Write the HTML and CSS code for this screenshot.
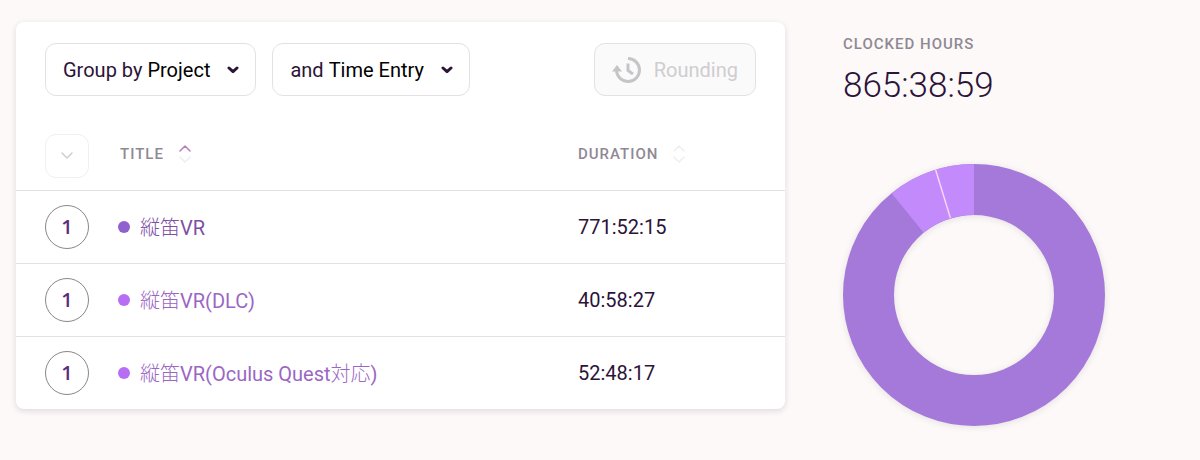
FILE: index.html
```html
<!DOCTYPE html>
<html lang="en">
<head>
    <meta charset="UTF-8">
    <meta name="viewport" content="width=device-width, initial-scale=1.0">
    <title>Summary Report</title>
    <link rel="stylesheet" href="styles.css">
</head>
<body>
    <main class="report">
        <section class="card">
            <div class="toolbar">
                <div class="dropdown">
                    <label for="group">Group by</label>
                    <select id="group">
                        <option>Project</option>
                        <option>Client</option>
                        <option>User</option>
                    </select>
                    <svg class="caret" viewBox="0 0 12 8" width="12" height="8"><path d="M2 2l4 3.600 4-3.600"/></svg>
                </div>
                <div class="dropdown">
                    <label for="subgroup">and</label>
                    <select id="subgroup">
                        <option>Time Entry</option>
                        <option>User</option>
                    </select>
                    <svg class="caret" viewBox="0 0 12 8" width="12" height="8"><path d="M2 2l4 3.600 4-3.600"/></svg>
                </div>
                <button class="rounding" disabled>
                    <svg viewBox="0 0 30 28" width="30" height="28">
                        <path class="arc" d="M16 2.500a11.500 11.500 0 1 1-11.500 12"/>
                        <path class="head" d="M0 15.500L5 9l5 6.500z"/>
                        <path class="hands" d="M16 7.500v7l5 3.500"/>
                    </svg>
                    Rounding
                </button>
            </div>

            <table>
                <thead>
                    <tr>
                        <th class="toggle">
                            <button class="expand" aria-label="Expand all">
                                <svg viewBox="0 0 12 8" width="12" height="8"><path d="M1 1l5 5 5-5"/></svg>
                            </button>
                        </th>
                        <th class="title">
                            <button class="sort">TITLE
                                <svg viewBox="0 0 12 18" width="12" height="18"><path class="active" d="M1 6l5-5 5 5"/><path d="M1 12l5 5 5-5"/></svg>
                            </button>
                        </th>
                        <th class="duration">
                            <button class="sort">DURATION
                                <svg viewBox="0 0 12 18" width="12" height="18"><path d="M1 6l5-5 5 5"/><path d="M1 12l5 5 5-5"/></svg>
                            </button>
                        </th>
                    </tr>
                </thead>
                <tbody>
                    <tr>
                        <td class="toggle"><button class="count">1</button></td>
                        <td><a class="project dark" href="#"><span><span class="ja" lang="ja">縦笛</span>VR</span></a></td>
                        <td>771:52:15</td>
                    </tr>
                    <tr>
                        <td class="toggle"><button class="count">1</button></td>
                        <td><a class="project" href="#"><span><span class="ja" lang="ja">縦笛</span>VR(DLC)</span></a></td>
                        <td>40:58:27</td>
                    </tr>
                    <tr>
                        <td class="toggle"><button class="count">1</button></td>
                        <td><a class="project" href="#"><span><span class="ja" lang="ja">縦笛</span>VR(Oculus Quest<span class="ja" lang="ja">対応</span>)</span></a></td>
                        <td>52:48:17</td>
                    </tr>
                </tbody>
            </table>
        </section>

        <aside class="summary">
            <h2>CLOCKED HOURS</h2>
            <p class="total">865:38:59</p>
            <!-- one degree of the ring per unit of path length -->
            <svg class="donut" viewBox="0 0 262 262" role="img" aria-label="Hours by project">
                <g transform="rotate(-90 131 131)">
                    <circle class="main" cx="131" cy="131" r="105.500" pathLength="360"/>
                    <circle class="light" cx="131" cy="131" r="105.500" pathLength="360" stroke-dasharray="39 321" stroke-dashoffset="-321"/>
                </g>
                <path class="split" d="M92.600 5.800L107.400 54"/>
            </svg>
        </aside>
    </main>
</body>
</html>
```
FILE: styles.css
```css
* {
    box-sizing: border-box;
}

body {
    margin: 0;
    background-color: #fdf9f8;
    color: #2c1338;
    font-family: Roboto, "Noto Sans CJK JP", sans-serif;
    font-size: 20px;
}

button, select {
    font: inherit;
    cursor: pointer;
}

svg {
    fill: none;
    stroke-linecap: round;
    stroke-linejoin: round;
}

.report {
    display: grid;
    grid-template-columns: minmax(0, 1fr) 341px;
    gap: 58px;
    align-items: start;
    padding: 22px 16px;
}

.card {
    background-color: #fff;
    border-radius: 8px;
    box-shadow: 0 2px 6px rgba(44, 19, 56, 0.14);
}

.toolbar {
    display: flex;
    gap: 16px;
    padding: 21px 29px 27px;
}

.dropdown {
    position: relative;
    display: flex;
    align-items: center;
    height: 53px;
    padding-left: 17px;
    border: 1px solid #e3e1e4;
    border-radius: 11px;
}

.dropdown select {
    height: 100%;
    padding: 0 44px 0 5px;
    border: none;
    background: none;
    color: #000;
    appearance: none;
}

.caret {
    position: absolute;
    right: 16px;
    stroke: #2c1338;
    stroke-width: 3;
    pointer-events: none;
}

.rounding {
    display: flex;
    align-items: center;
    gap: 12px;
    height: 53px;
    margin-left: auto;
    padding: 0 17px;
    border: 1px solid #e3e1e4;
    border-radius: 11px;
    background-color: #fafafa;
    color: #cfcdd0;
    cursor: default;
}

.rounding svg {
    stroke: #c6c4c7;
    stroke-width: 3;
    stroke-linecap: butt;
}

.rounding .head {
    fill: #c6c4c7;
    stroke: none;
}

table {
    width: 100%;
    table-layout: fixed;
    border-collapse: collapse;
}

th, td {
    padding: 0;
    text-align: left;
    font-weight: 400;
}

th {
    height: 67px;
}

td {
    height: 73px;
    border-top: 1px solid #e3e1e4;
}

.toggle {
    width: 102px;
    padding-left: 29px;
}

.title, .duration {
    padding-bottom: 4px;
}

.title {
    padding-left: 2px;
}

.duration {
    width: 207px;
}

.expand, .count {
    display: flex;
    align-items: center;
    justify-content: center;
    width: 44px;
    height: 44px;
    padding: 0;
    background: none;
}

.expand {
    border: 1px solid #f1eff1;
    border-radius: 11px;
}

.expand svg {
    stroke: #cfcdd0;
    stroke-width: 1.500;
}

.count {
    border: 1px solid #8a858d;
    border-radius: 50%;
    color: #5b2d7a;
    font-family: "Open Sans", sans-serif;
    font-weight: 600;
}

.sort {
    display: flex;
    align-items: center;
    gap: 15px;
    padding: 0;
    border: none;
    background: none;
    color: #8f8994;
    font-size: 15px;
    font-weight: 500;
    letter-spacing: 1px;
}

.sort svg {
    stroke: #f0eef0;
    stroke-width: 1.500;
}

.sort .active {
    stroke: #b57fb8;
}

.project {
    display: flex;
    align-items: center;
    gap: 10px;
    color: #9a67c4;
    text-decoration: none;
}

.project::before {
    content: "";
    width: 12px;
    height: 12px;
    border-radius: 50%;
    background-color: #b76ef5;
}

.project.dark {
    color: #7d50a8;
}

.project.dark::before {
    background-color: #9060cc;
}

.ja {
    font-weight: 300;
}

.summary h2 {
    margin: 12px 0 0;
    color: #8f8994;
    font-size: 15px;
    font-weight: 500;
    line-height: 20px;
    letter-spacing: 1px;
}

.total {
    margin: 11px 0 57px;
    font-size: 35px;
    font-weight: 300;
    line-height: 42px;
}

.donut {
    display: block;
    width: 262px;
    filter: drop-shadow(0 1px 3px rgba(44, 19, 56, 0.12));
}

.donut circle {
    stroke-width: 51;
    stroke-linecap: butt;
}

.main {
    stroke: #a479da;
}

.light {
    stroke: #c28afb;
}

.split {
    stroke: #f6d5f7;
    stroke-width: 1.500;
    stroke-linecap: butt;
}
```
